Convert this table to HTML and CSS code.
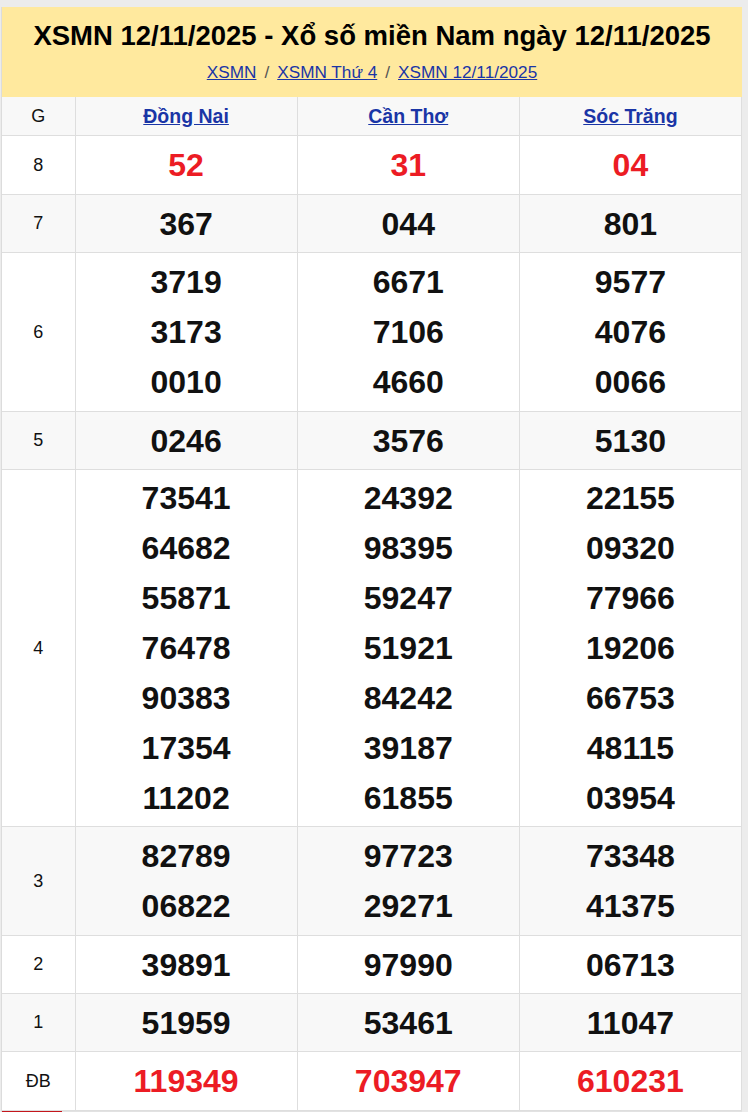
FILE: index.html
```html
<!DOCTYPE html>
<html lang="vi">
<head>
<meta charset="utf-8">
<title>XSMN 12/11/2025</title>
<link rel="stylesheet" href="styles.css">
</head>
<body>
<div class="page">
  <div class="card">
    <div class="head">
      <h1 class="title">XSMN 12/11/2025 - Xổ số miền Nam ngày 12/11/2025</h1>
      <div class="crumbs">
        <a href="#">XSMN</a><span class="sep">/</span><a href="#">XSMN Thứ 4</a><span class="sep">/</span><a href="#">XSMN 12/11/2025</a>
      </div>
    </div>
    <table class="results">
      <colgroup><col class="c-g"><col class="c-p"><col class="c-p"><col class="c-p"></colgroup>
      <tr class="alt">
        <td class="lbl">G</td>
        <td class="prov"><a href="#">Đồng Nai</a></td>
        <td class="prov"><a href="#">Cần Thơ</a></td>
        <td class="prov"><a href="#">Sóc Trăng</a></td>
      </tr>
      <tr class="big">
        <td class="lbl">8</td>
        <td class="num red"><div>52</div></td>
        <td class="num red"><div>31</div></td>
        <td class="num red"><div>04</div></td>
      </tr>
      <tr class="alt">
        <td class="lbl">7</td>
        <td class="num"><div>367</div></td>
        <td class="num"><div>044</div></td>
        <td class="num"><div>801</div></td>
      </tr>
      <tr class="big">
        <td class="lbl">6</td>
        <td class="num"><div>3719</div><div>3173</div><div>0010</div></td>
        <td class="num"><div>6671</div><div>7106</div><div>4660</div></td>
        <td class="num"><div>9577</div><div>4076</div><div>0066</div></td>
      </tr>
      <tr class="alt">
        <td class="lbl">5</td>
        <td class="num"><div>0246</div></td>
        <td class="num"><div>3576</div></td>
        <td class="num"><div>5130</div></td>
      </tr>
      <tr class="r4">
        <td class="lbl">4</td>
        <td class="num"><div>73541</div><div>64682</div><div>55871</div><div>76478</div><div>90383</div><div>17354</div><div>11202</div></td>
        <td class="num"><div>24392</div><div>98395</div><div>59247</div><div>51921</div><div>84242</div><div>39187</div><div>61855</div></td>
        <td class="num"><div>22155</div><div>09320</div><div>77966</div><div>19206</div><div>66753</div><div>48115</div><div>03954</div></td>
      </tr>
      <tr class="alt big">
        <td class="lbl">3</td>
        <td class="num"><div>82789</div><div>06822</div></td>
        <td class="num"><div>97723</div><div>29271</div></td>
        <td class="num"><div>73348</div><div>41375</div></td>
      </tr>
      <tr>
        <td class="lbl">2</td>
        <td class="num"><div>39891</div></td>
        <td class="num"><div>97990</div></td>
        <td class="num"><div>06713</div></td>
      </tr>
      <tr class="alt">
        <td class="lbl">1</td>
        <td class="num"><div>51959</div></td>
        <td class="num"><div>53461</div></td>
        <td class="num"><div>11047</div></td>
      </tr>
      <tr class="big">
        <td class="lbl">ĐB</td>
        <td class="num red"><div>119349</div></td>
        <td class="num red"><div>703947</div></td>
        <td class="num red"><div>610231</div></td>
      </tr>
    </table>
    <div class="tabs"><span class="tab active"></span><span class="tab"></span></div>
  </div>
</div>
</body>
</html>
```

FILE: styles.css
```css
html, body {
  margin: 0;
  padding: 0;
  background: #ececec;
  font-family: "Liberation Sans", Arial, sans-serif;
  color: #111;
}
.page {
  padding: 7px 6px 0 1px;
}
.card {
  background: #fff;
  border-left: 1px solid #dcdcdc;
}
.head {
  background: #ffe99e;
  text-align: center;
  padding: 12px 0 11px;
  height: 67px;
}
.title {
  margin: 0;
  font-size: 27.5px;
  font-weight: bold;
  line-height: 34px;
  color: #000;
}
.crumbs {
  margin-top: 8px;
  font-size: 17.2px;
  line-height: 22px;
  color: #444;
}
.crumbs a {
  color: #1a35a6;
  text-decoration: underline;
}
.crumbs .sep {
  margin: 0 8px;
  color: #555;
}
.results {
  width: 100%;
  border-collapse: collapse;
  table-layout: fixed;
}
.c-g { width: 73px; }
.results td {
  border: 1px solid #dedede;
  text-align: center;
  vertical-align: middle;
  padding: 0;
}
.results tr:first-child td { border-top: none; }
.results td:first-child { border-left: none; }
.results tr.alt td { background: #f8f8f8; }
.lbl {
  font-size: 18px;
  color: #111;
}
.results tr:first-child td {
  height: 38px;
}
.prov a {
  font-size: 19.5px;
  font-weight: bold;
  color: #1a35a6;
  text-decoration: underline;
}
.num {
  padding: 4px 0 3px !important;
}
.big .num {
  padding: 4px 0 4px !important;
}
.r4 .num {
  padding: 3px 0 3px !important;
}
.num div {
  font-size: 32px;
  font-weight: bold;
  line-height: 50px;
  color: #111;
}
.num.red div {
  color: #ec1c24;
}
.tabs {
  display: flex;
  height: 2px;
  background: #e2e2e2;
}
.tab {
  width: 60px;
  height: 2px;
}
.tab.active { background: #c4161c; }
```
